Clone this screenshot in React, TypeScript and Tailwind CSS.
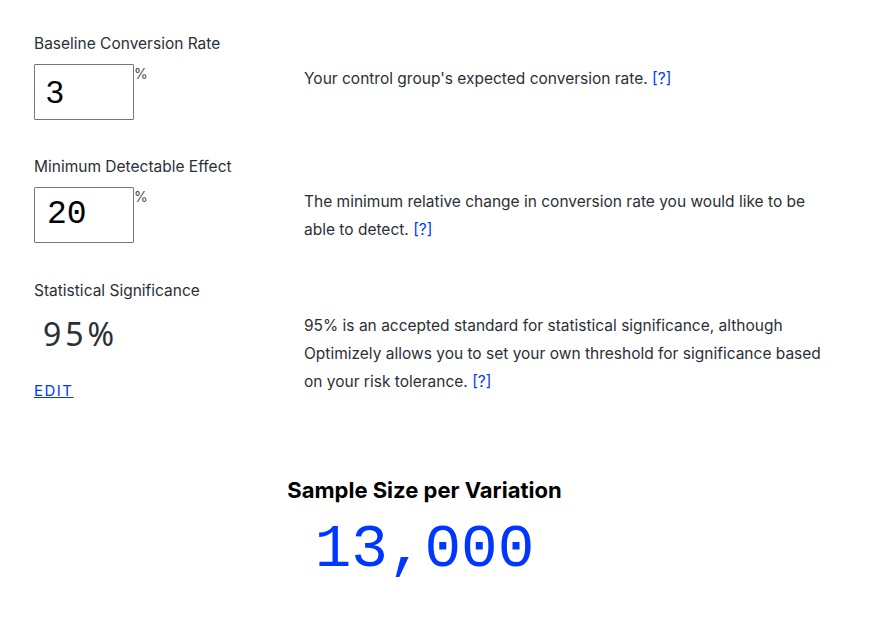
export default function App() {
  const mono = { fontFamily: '"Liberation Mono", "Courier New", monospace' };
  return (
    <div className="w-[869px] h-[630px] bg-white text-[#2b2f36] overflow-hidden" style={{ fontFamily: 'Inter, "Noto Sans", sans-serif' }}>
      <div className="pl-[34px] pt-[35px] flex flex-col">
        {/* Row 1 */}
        <div className="flex">
          <div className="w-[270px] shrink-0">
            <div className="text-[15.5px] leading-[18px]">Baseline Conversion Rate</div>
            <div className="flex mt-[11px]">
              <div className="w-[100px] h-[56px] border border-[#777] rounded-[1px] flex items-center pl-[11px] text-[32px] text-black" style={{ fontFamily: '"Liberation Sans", Arial, sans-serif' }}>3</div>
              <div className="text-[14px] leading-[16px] mt-[2px] text-[#444]">%</div>
            </div>
          </div>
          <div className="pt-[30px] text-[15.5px] leading-[28px] max-w-[520px]">
            Your control group's expected conversion rate. <span className="text-[#0037ff]">[?]</span>
          </div>
        </div>
        {/* Row 2 */}
        <div className="flex mt-[38px]">
          <div className="w-[270px] shrink-0">
            <div className="text-[15.5px] leading-[18px]">Minimum Detectable Effect</div>
            <div className="flex mt-[11px]">
              <div className="w-[100px] h-[56px] border border-[#777] rounded-[1px] flex items-center pl-[12px] text-[33px] text-black slashed-zero" style={mono}>20</div>
              <div className="text-[14px] leading-[16px] mt-[2px] text-[#444]">%</div>
            </div>
          </div>
          <div className="pt-[30px] text-[15.5px] leading-[28px] max-w-[520px]">
            The minimum relative change in conversion rate you would like to be able to detect. <span className="text-[#0037ff]">[?]</span>
          </div>
        </div>
        {/* Row 3 */}
        <div className="flex mt-[38px]">
          <div className="w-[270px] shrink-0">
            <div className="text-[15.5px] leading-[18px]">Statistical Significance</div>
            <div className="mt-[16px] pl-[9px] text-[32px] leading-[36px] tracking-[4px] text-[#2b2f36]" style={{ fontFamily: '"Noto Sans", sans-serif' }}>95%</div>
            <div className="mt-[26px]">
              <a href="#" className="text-[#0037ff] underline text-[15px] tracking-[1.5px]">EDIT</a>
            </div>
          </div>
          <div className="pt-[30px] text-[15.5px] leading-[28px] max-w-[520px]">
            95% is an accepted standard for statistical significance, although Optimizely allows you to set your own threshold for significance based on your risk tolerance. <span className="text-[#0037ff]">[?]</span>
          </div>
        </div>
      </div>
      <div className="flex flex-col items-center mt-[74px] pr-[20px]">
        <div className="text-[22px] font-bold text-black leading-[26px]">Sample Size per Variation</div>
        <div className="text-[61px] leading-[66px] mt-[14px] text-[#0037ff] slashed-zero" style={mono}>13,000</div>
      </div>
    </div>
  );
}
